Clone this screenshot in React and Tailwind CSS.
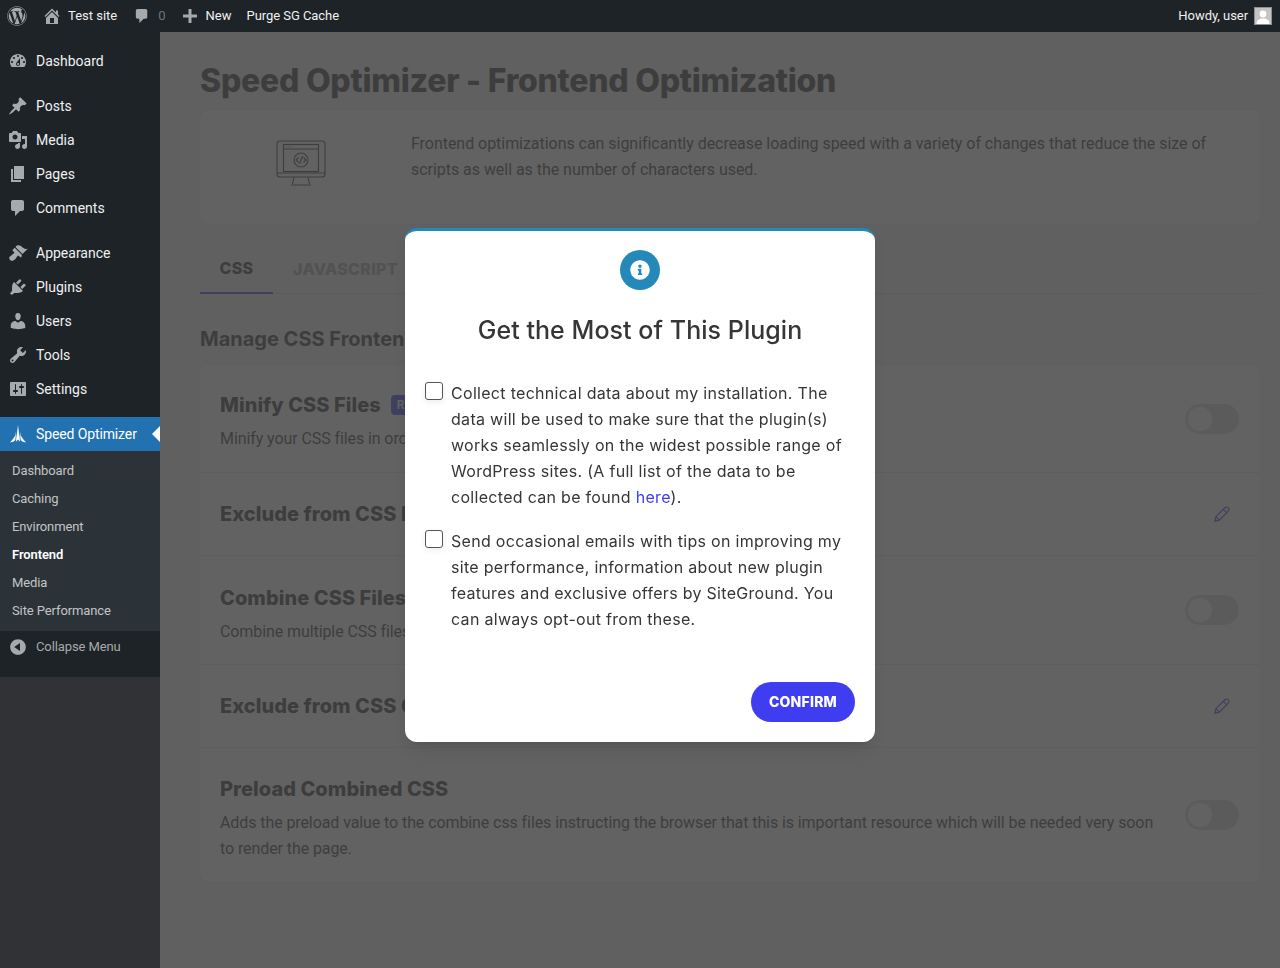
import { FaWordpress, FaInfoCircle } from "react-icons/fa";

const ICONS = {
  home: "M16 8.5l1.53 1.53-1.06 1.06L10 4.62l-6.47 6.47-1.06-1.06L10 2.5l4 4v-2h2v4zm-6-2.46l6 5.99V18H4v-5.97zM12 17v-5H8v5h4z",
  dashboard: "M3.76 16h12.48c1.1-1.37 1.76-3.11 1.76-5 0-4.42-3.58-8-8-8s-8 3.58-8 8c0 1.89.66 3.63 1.76 5zM10 4c.55 0 1 .45 1 1s-.45 1-1 1-1-.45-1-1 .45-1 1-1zM6 6c.55 0 1 .45 1 1s-.45 1-1 1-1-.45-1-1 .45-1 1-1zm8 0c.55 0 1 .45 1 1s-.45 1-1 1-1-.45-1-1 .45-1 1-1zm-5.37 5.55L12 7v6c0 1.1-.9 2-2 2s-2-.9-2-2c0-.57.24-1.08.63-1.45zM4 10c.55 0 1 .45 1 1s-.45 1-1 1-1-.45-1-1 .45-1 1-1zm12 0c.55 0 1 .45 1 1s-.45 1-1 1-1-.45-1-1 .45-1 1-1zm-5 3c0-.55-.45-1-1-1s-1 .45-1 1 .45 1 1 1 1-.45 1-1z",
  posts: "M10.44 3.02l1.82-1.82 6.36 6.35-1.83 1.82c-1.05-.68-2.48-.57-3.41.36l-.75.75c-.92.93-1.04 2.35-.35 3.41l-1.83 1.82-2.41-2.41-2.8 2.79c-.42.42-3.38 2.71-3.8 2.29s1.86-3.39 2.28-3.81l2.79-2.79L4.1 9.36l1.83-1.82c1.05.69 2.48.57 3.4-.36l.75-.75c.93-.92 1.05-2.35.36-3.41z",
  media: "M13 11V4c0-.55-.45-1-1-1h-1.67L9 1H5L3.67 3H2c-.55 0-1 .45-1 1v7c0 .55.45 1 1 1h10c.55 0 1-.45 1-1zM7 4.5c1.38 0 2.5 1.12 2.5 2.5S8.38 9.5 7 9.5 4.5 8.38 4.5 7 5.62 4.5 7 4.5zM14 6h5v10.5c0 1.38-1.12 2.5-2.5 2.5S14 17.88 14 16.5s1.12-2.5 2.5-2.5c.17 0 .34.02.5.05V9h-3V6zm-4 8.05V13h2v3.5c0 1.38-1.12 2.5-2.5 2.5S7 17.88 7 16.5 8.12 14 9.5 14c.17 0 .34.02.5.05z",
  pages: "M6 15V2h10v13H6zm-1 1h8v2H3V5h2v11z",
  comments: "M5 2h9c1.1 0 2 .9 2 2v7c0 1.1-.9 2-2 2h-2l-5 5v-5H5c-1.1 0-2-.9-2-2V4c0-1.1.9-2 2-2z",
  appearance: "M14.48 11.06L7.41 3.99l1.5-1.5c.5-.56 2.3-.47 3.51.32 1.21.8 1.43 1.28 2.91 2.1 1.18.64 2.45 1.26 4.45.85zm-.71.71L6.7 4.7 4.93 6.47c-.39.39-.39 1.02 0 1.41l1.06 1.06c.39.39.39 1.03 0 1.42-.6.6-1.43 1.11-2.21 1.69-.35.26-.7.53-1.01.84C1.43 13.23.4 15.19 2.1 16.89s3.67.67 4.99-.64c.31-.31.58-.66.84-1.01.58-.78 1.09-1.61 1.69-2.21.39-.39 1.02-.39 1.41 0l1.06 1.06c.39.39 1.02.39 1.41 0z",
  plugins: "M13.11 4.36L9.87 7.6 8 5.73l3.24-3.24c.35-.34 1.05-.2 1.56.32.52.51.66 1.21.31 1.55zm-8 1.77l.91-1.12 9.01 9.01-1.19.84c-.71.71-2.63 1.16-3.82 1.16H6.14L4.9 17.26c-.59.59-1.54.59-2.12 0-.59-.58-.59-1.53 0-2.12l1.24-1.24v-3.88c0-1.13.4-3.19 1.09-3.89zm7.26 3.97l3.24-3.24c.34-.35 1.04-.21 1.55.31.52.51.66 1.21.31 1.55l-3.24 3.25z",
  users: "M10 9.25c-2.27 0-2.73-3.44-2.73-3.44C7 4.02 7.82 2 9.97 2c2.16 0 2.98 2.02 2.71 3.81 0 0-.41 3.44-2.68 3.44zm0 2.57L12.72 10c2.39 0 4.52 2.33 4.52 4.53v2.49s-3.65 1.13-7.24 1.13c-3.65 0-7.24-1.13-7.24-1.13v-2.49c0-2.25 1.94-4.48 4.47-4.48z",
  tools: "M16.68 9.77c-1.34 1.34-3.3 1.67-4.95.99l-5.41 6.52c-.99.99-2.59.99-3.58 0s-.99-2.59 0-3.57l6.52-5.42c-.68-1.65-.35-3.61.99-4.95 1.28-1.28 3.12-1.62 4.72-1.06l-2.89 2.89 2.82 2.82 2.86-2.87c.53 1.58.18 3.39-1.08 4.65zM3.81 16.21c.4.39 1.04.39 1.43 0 .4-.4.4-1.04 0-1.43-.39-.4-1.03-.4-1.43 0-.39.39-.39 1.03 0 1.43z",
  settings: "M18 16V4c0-.55-.45-1-1-1H3c-.55 0-1 .45-1 1v12c0 .55.45 1 1 1h14c.55 0 1-.45 1-1zM8 11h1c.55 0 1 .45 1 1s-.45 1-1 1H8v1.5c0 .28-.22.5-.5.5s-.5-.22-.5-.5V13H6c-.55 0-1-.45-1-1s.45-1 1-1h1V5.5c0-.28.22-.5.5-.5s.5.22.5.5V11zm5-2h-1c-.55 0-1-.45-1-1s.45-1 1-1h1V5.5c0-.28.22-.5.5-.5s.5.22.5.5V7h1c.55 0 1 .45 1 1s-.45 1-1 1h-1v5.5c0 .28-.22.5-.5.5s-.5-.22-.5-.5V9z",
  plus: "M17 8.5v3h-5.5V17h-3v-5.5H3v-3h5.5V3h3v5.5H17z",
  collapse: "M10 2.16c4.33 0 7.84 3.51 7.84 7.84s-3.51 7.84-7.84 7.84S2.16 14.33 2.16 10 5.71 2.16 10 2.16zm2 11.72V6.12L6.18 9.97z",
};

function Dashicon({ name, className }) {
  return (
    <svg viewBox="0 0 20 20" className={className} fill="currentColor">
      <path d={ICONS[name]} />
    </svg>
  );
}

const menuGroups = [
  [{ icon: "dashboard", label: "Dashboard" }],
  [
    { icon: "posts", label: "Posts" },
    { icon: "media", label: "Media" },
    { icon: "pages", label: "Pages" },
    { icon: "comments", label: "Comments" },
  ],
  [
    { icon: "appearance", label: "Appearance" },
    { icon: "plugins", label: "Plugins" },
    { icon: "users", label: "Users" },
    { icon: "tools", label: "Tools" },
    { icon: "settings", label: "Settings" },
  ],
];

const subMenu = ["Dashboard", "Caching", "Environment", "Frontend", "Media", "Site Performance"];

function AdminBar() {
  return (
    <header className="flex h-8 items-center justify-between bg-[#1d2327] text-[13px] text-[#f0f0f1]">
      <div className="flex items-center">
        <FaWordpress className="ml-[7px] h-5 w-5 text-[#a7aaad]" />
        <Dashicon name="home" className="ml-[17px] h-4 w-4 scale-125 text-[#a7aaad]" />
        <span className="ml-2">Test site</span>
        <Dashicon name="comments" className="ml-[17px] h-4 w-4 scale-110 text-[#a7aaad]" />
        <span className="ml-2 text-[#6f7478]">0</span>
        <Dashicon name="plus" className="ml-4 h-4 w-4 scale-125 text-[#a7aaad]" />
        <span className="ml-2">New</span>
        <span className="ml-[15px] tracking-[-0.05px]">Purge SG Cache</span>
      </div>
      <div className="flex items-center">
        <span className="tracking-[-0.05px]">Howdy, user</span>
        <div className="ml-[6px] mr-2 flex h-[18px] w-[18px] items-end justify-center overflow-hidden border border-[#8c8f94] bg-[#c4c4c4]">
          <svg viewBox="0 0 16 16" className="h-4 w-4 text-white" fill="currentColor">
            <circle cx="8" cy="6" r="3.4" />
            <path d="M1.5 16c0-4 3-5.6 6.5-5.6s6.5 1.6 6.5 5.6z" />
          </svg>
        </div>
      </div>
    </header>
  );
}

function Sidebar() {
  return (
    <aside className="flex w-40 shrink-0 flex-col bg-[#313235] text-sm text-[#f0f0f1]">
      <div className="bg-[#1d2327] pt-3">
        {menuGroups.map((group, i) => (
          <div key={i} className="mb-[11px]">
            {group.map((item) => (
              <div key={item.label} className="flex h-[34px] items-center">
                <Dashicon name={item.icon} className="ml-2 h-5 w-5 text-[#a7aaad]" />
                <span className="ml-2">{item.label}</span>
              </div>
            ))}
          </div>
        ))}
        <div className="relative flex h-[34px] items-center bg-[#2271b1] text-white">
          <svg viewBox="0 0 20 20" className="ml-[9px] h-5 w-[18px]" fill="currentColor">
            <path d="M10 0l1 8 .9 6 .3 4.5L10 16l-2.2 2.5.3-4.5.9-6z" />
            <path d="M7.6 7L6.8 12 4.4 15.6 1 19.4l4.4-1.2 1.6-1.6.4-3zM12.4 7l.8 5 2.4 3.6 3.4 3.8-4.4-1.2-1.6-1.6-.4-3z" />
          </svg>
          <span className="ml-[9px] tracking-[-0.12px]">Speed Optimizer</span>
          <div className="absolute right-0 h-0 w-0 border-y-8 border-r-8 border-y-transparent border-r-white" />
        </div>
        <ul className="bg-[#2c3338] pb-[6px] pl-3 pt-[6px] text-[13px] tracking-[-0.1px] text-[#c3c4c7]">
          {subMenu.map((label) => (
            <li key={label} className={`flex h-7 items-center ${label === "Frontend" ? "font-semibold text-white" : ""}`}>
              {label}
            </li>
          ))}
        </ul>
        <div className="flex h-[46px] items-start pt-[6px] text-[13px] tracking-[-0.1px] text-[#a7aaad]">
          <Dashicon name="collapse" className="ml-2 h-5 w-5" />
          <span className="ml-2 mt-px">Collapse Menu</span>
        </div>
      </div>
    </aside>
  );
}

function Toggle() {
  return (
    <div className="flex h-[30px] w-[54px] shrink-0 items-center rounded-full bg-[#d9d9d9] p-[2px]">
      <div className="h-[26px] w-[26px] rounded-full border border-[#ddd] bg-white" />
    </div>
  );
}

function Pencil() {
  return (
    <svg viewBox="0 0 20 20" className="mr-2 h-[18px] w-[18px] shrink-0 text-[#3e3ef0]" fill="none" stroke="currentColor" strokeWidth="1.3">
      <path d="M2 18l1.2-5L13.5 2.8c.8-.8 2-.8 2.8 0l.9.9c.8.8.8 2 0 2.8L7 16.8z" />
      <path d="M11.5 4.8l3.7 3.7M3.2 13l3.8 3.8" />
    </svg>
  );
}

const headingFont = "font-['Inter','Liberation_Sans',sans-serif]";

function SettingRow({ title, badge, desc, control, offset, height }) {
  return (
    <div className={`flex items-center justify-between border-t border-[#e5e5e5] pl-5 pr-[21px] first:border-t-0 ${height}`}>
      <div className={`max-w-[945px] ${offset}`}>
        <div className="flex items-center">
          <h3 className={`${headingFont} text-[20px] font-extrabold leading-[30px] tracking-[0.05px] text-[#363636]`}>{title}</h3>
          {badge && (
            <span className="ml-[10px] rounded-sm bg-[#3e3ef0] px-[6px] text-xs font-semibold leading-5 text-white">{badge}</span>
          )}
        </div>
        {desc && <p className="mt-[6px] text-base leading-[26px] tracking-[-0.09px] text-[#363636]">{desc}</p>}
      </div>
      {control}
    </div>
  );
}

function ConsentRow({ children }) {
  return (
    <div className="flex">
      <div className="mt-[2px] h-[18px] w-[18px] shrink-0 rounded-[3px] border border-[#555] bg-white shadow-[0_2px_6px_rgba(0,0,0,0.08)]" />
      <p className="ml-2 text-base leading-[26px] tracking-[0.3px] text-[#363636]">{children}</p>
    </div>
  );
}

function ConsentModal() {
  return (
    <div className="fixed inset-0 flex items-center justify-center pt-[2px]">
      <div className={`${headingFont} h-[514px] w-[470px] rounded-xl border-t-[3px] border-[#2489b9] bg-white px-5 pt-[19px] shadow-lg`}>
        <div className="mx-auto flex h-10 w-10 items-center justify-center rounded-full bg-[#2489b9]">
          <FaInfoCircle className="h-5 w-5 text-white" />
        </div>
        <h2 className="mt-[22px] text-center text-[25px] font-medium leading-9 tracking-[0.05px] text-[#363636]">Get the Most of This Plugin</h2>
        <div className="mt-8 flex flex-col gap-[18px]">
          <ConsentRow>
            Collect technical data about my installation. The data will be used to make sure that the plugin(s) works seamlessly on the widest possible range of WordPress sites. (A full list of the data to be collected can be found <span className="text-[#3e3ef0]">here</span>).
          </ConsentRow>
          <ConsentRow>
            Send occasional emails with tips on improving my site performance, information about new plugin features and exclusive offers by SiteGround. You can always opt-out from these.
          </ConsentRow>
        </div>
        <div className="mt-[50px] flex justify-end">
          <button className="h-10 w-[104px] rounded-full bg-[#3e3ef0] text-sm font-extrabold uppercase tracking-[0.2px] text-white">Confirm</button>
        </div>
      </div>
    </div>
  );
}

export default function App() {
  return (
    <div className="flex min-h-screen flex-col font-['Roboto',sans-serif]">
      <AdminBar />
      <div className="flex flex-1">
        <Sidebar />
        <main className="relative flex-1 bg-[#f1f1f1] pl-10 pr-5 text-[#363636]">
          <h1 className={`${headingFont} mt-7 text-[32px] font-extrabold leading-[42px] tracking-[-0.25px]`}>Speed Optimizer - Frontend Optimization</h1>
          <section className="mt-2 flex h-[114px] items-start rounded-lg bg-white shadow-[0_0_2px_rgba(0,0,0,0.08)]">
            <div className="flex w-[211px] justify-center pr-[9px] pt-[30px]">
              <svg viewBox="0 0 50 46" className="h-[46px] w-[50px] text-[#363636]" fill="none" stroke="currentColor" strokeWidth="1.1">
                <rect x="1" y="1" width="48" height="36" rx="3" />
                <rect x="7.5" y="4.5" width="35" height="27" />
                <path d="M7.5 9h35M10 7h.8M12.5 7h.8M15 7h.8M18 37l-1.5 7M32 37l1.5 7M15 45h20M1 33h48" />
                <circle cx="25" cy="20" r="7" />
                <path d="M22.5 17.5L20 20l2.5 2.5M27.5 17.5L30 20l-2.5 2.5M26.5 16l-3 8" />
              </svg>
            </div>
            <p className="mt-[21px] w-[830px] text-base leading-[26px] tracking-[-0.04px]">
              Frontend optimizations can significantly decrease loading speed with a variety of changes that reduce the size of scripts as well as the number of characters used.
            </p>
          </section>
          <nav className={`${headingFont} mt-5 flex h-[50px] border-b border-[#d5d5d5] text-base font-extrabold uppercase tracking-[0.3px]`}>
            <div className="flex h-[50px] w-[73px] items-center justify-center border-b-2 border-[#3e3ef0]">CSS</div>
            <div className="ml-5 flex h-[50px] items-center text-[#a4a4a4]">JavaScript</div>
          </nav>
          <h2 className={`${headingFont} mt-[30px] text-[20px] font-bold leading-[30px]`}>Manage CSS Frontend Optimization</h2>
          <section className="mt-[11px] flex flex-col rounded-lg bg-white shadow-[0_0_2px_rgba(0,0,0,0.08)]">
            <SettingRow height="h-[107px]" offset="pt-1" title="Minify CSS Files" badge="RECOMMENDED" desc="Minify your CSS files in order to reduce their size and the number of requests to the server." control={<Toggle />} />
            <SettingRow height="h-[83px]" title="Exclude from CSS Minification" control={<Pencil />} />
            <SettingRow height="h-[109px]" offset="pt-[7px]" title="Combine CSS Files" desc="Combine multiple CSS files into one to lower the number of requests your site generates." control={<Toggle />} />
            <SettingRow height="h-[83px]" title="Exclude from CSS Combination" control={<Pencil />} />
            <SettingRow
              height="h-[135px]"
              offset="pt-[5px]"
              title="Preload Combined CSS"
              desc="Adds the preload value to the combine css files instructing the browser that this is important resource which will be needed very soon to render the page."
              control={<Toggle />}
            />
          </section>
          {/* dim layer sits over the page content but under the modal */}
          <div className="absolute inset-0 bg-[#404040]/[0.82]" />
        </main>
      </div>
      <ConsentModal />
    </div>
  );
}
